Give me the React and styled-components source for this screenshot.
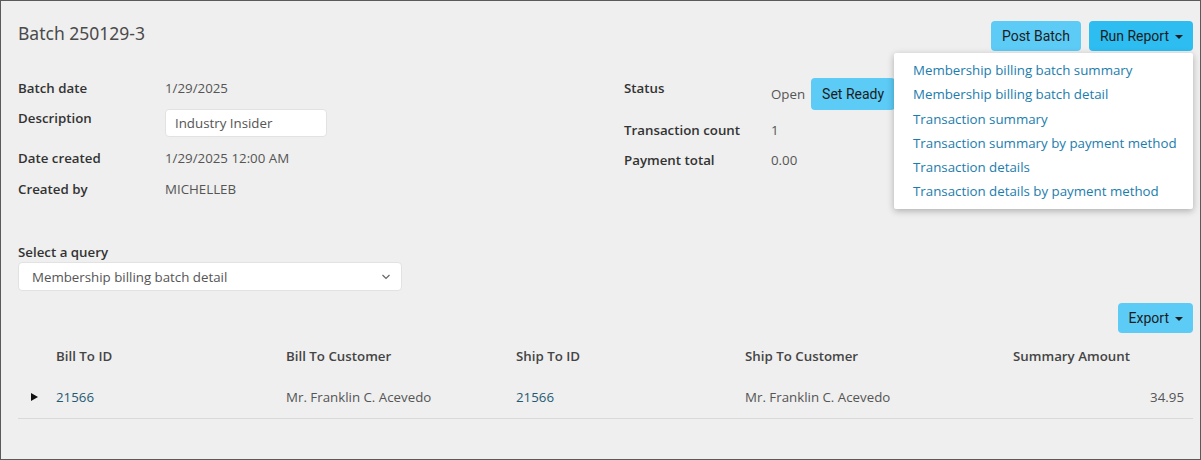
import styled, { createGlobalStyle } from "styled-components";

const GlobalStyle = createGlobalStyle`
    html, body {
        margin: 0;
        padding: 0;
        background: #ffffff;
    }
    * {
        box-sizing: border-box;
    }
`;

const Page = styled.div`
    width: 1201px;
    height: 460px;
    border: 1px solid #5a5a5a;
    background-color: #efefef;
    padding: 19px 7px 0 17px;
    font-family: "Open Sans", "Liberation Sans", sans-serif;
    font-size: 13.3px;
    color: #555;
    overflow: hidden;
`;

const Header = styled.div`
    display: flex;
    justify-content: space-between;
    align-items: flex-start;
    height: 32px;
`;

const Title = styled.h1`
    margin: 1px 0 0;
    font-family: "Noto Sans", "Open Sans", sans-serif;
    font-size: 17.5px;
    font-weight: 400;
    line-height: 24px;
    color: #4a4a4a;
`;

const Actions = styled.div`
    position: relative;
    display: flex;
    gap: 8px;
    margin-top: 1px;
`;

const Button = styled.button`
    display: inline-flex;
    align-items: center;
    gap: 6px;
    height: ${props => props.tall ? "32px" : "30px"};
    padding: 0 ${props => props.caret ? "10px" : "11px"} 0 11px;
    border: none;
    border-radius: 4px;
    background-color: ${props => props.active ? "#2dbdf0" : "#5ccbf6"};
    font-family: Roboto, "Liberation Sans", sans-serif;
    font-size: 14px;
    color: #1c1c1c;
    cursor: pointer;
    white-space: nowrap;
`;

const Caret = styled.span`
    width: 0;
    height: 0;
    border-left: 4px solid transparent;
    border-right: 4px solid transparent;
    border-top: 4px solid #1c1c1c;
    margin-top: 1px;
`;

const Menu = styled.ul`
    position: absolute;
    top: 32px;
    right: 0;
    width: 299px;
    margin: 0;
    padding: 5px 0 5px;
    list-style: none;
    background: #ffffff;
    border-radius: 2px;
    box-shadow: 0 2px 7px rgba(0, 0, 0, 0.28);
    z-index: 5;
`;

const MenuItem = styled.li`
    padding: 0 19px;
    line-height: 24.3px;
    color: #1b7dad;
    white-space: nowrap;
    cursor: pointer;
`;

const Details = styled.div`
    display: flex;
    margin-top: 26px;
`;

const Column = styled.div`
    display: flex;
    flex-direction: column;
    gap: ${props => props.gap}px;
    width: ${props => props.width || "auto"};
`;

const Row = styled.div`
    display: flex;
    align-items: flex-start;
`;

const Label = styled.div`
    width: 147px;
    flex-shrink: 0;
    line-height: 20px;
    font-weight: 600;
    color: #333;
    margin-top: ${props => props.lift ? "-1px" : "0"};
`;

const Value = styled.div`
    display: flex;
    align-items: center;
    gap: 6px;
    line-height: 20px;
    color: #555;
`;

const TextInput = styled.div`
    width: 162px;
    height: 28px;
    padding: 0 9px;
    display: flex;
    align-items: center;
    background: #fff;
    border: 1px solid #e2e2e2;
    border-radius: 4px;
    color: #555;
`;

const QueryBlock = styled.div`
    margin-top: 43px;
    width: 384px;
`;

const QueryLabel = styled.div`
    line-height: 20px;
    font-weight: 600;
    color: #333;
`;

const Select = styled.div`
    height: 29px;
    padding: 0 10px 0 13px;
    display: flex;
    align-items: center;
    justify-content: space-between;
    background: #fff;
    border: 1px solid #e2e2e2;
    border-radius: 4px;
    color: #555;
`;

const ExportBar = styled.div`
    display: flex;
    justify-content: flex-end;
    margin-top: 12px;
`;

const Grid = styled.div`
    display: grid;
    grid-template-columns: 38px 230px 230px 229px 268px 1fr;
    margin-top: 13px;
`;

const HeadCell = styled.div`
    line-height: 20px;
    font-weight: 600;
    color: #444;
    padding-bottom: 21px;
`;

const Cell = styled.div`
    line-height: 20px;
    color: ${props => props.link ? "#1f5a74" : "#555"};
    padding: 0 ${props => props.right ? "9px" : "0"} 11px 0;
    border-bottom: 1px solid #d9d9d9;
    display: flex;
    align-items: center;
    justify-content: ${props => props.right ? "flex-end" : "flex-start"};
`;

const Toggle = styled.span`
    width: 0;
    height: 0;
    margin-left: 13px;
    border-top: 4px solid transparent;
    border-bottom: 4px solid transparent;
    border-left: 7px solid #111;
`;

const reportItems = [
    "Membership billing batch summary",
    "Membership billing batch detail",
    "Transaction summary",
    "Transaction summary by payment method",
    "Transaction details",
    "Transaction details by payment method",
];

const Chevron = () => (
    <svg width="10" height="6" viewBox="0 0 10 6">
        <path d="M1.5 1 L5 4.5 L8.5 1" fill="none" stroke="#666" strokeWidth="1.2" />
    </svg>
);

const App = () => {
    return (
        <>
            <GlobalStyle />
            <Page>
                <Header>
                    <Title>Batch 250129-3</Title>
                    <Actions>
                        <Button>Post Batch</Button>
                        <Button active caret>Run Report <Caret /></Button>
                        <Menu>
                            {reportItems.map(item => (
                                <MenuItem key={item}>{item}</MenuItem>
                            ))}
                        </Menu>
                    </Actions>
                </Header>

                <Details>
                    <Column gap={11} width="606px">
                        <Row>
                            <Label>Batch date</Label>
                            <Value>1/29/2025</Value>
                        </Row>
                        <Row>
                            <Label lift>Description</Label>
                            <TextInput>Industry Insider</TextInput>
                        </Row>
                        <Row>
                            <Label>Date created</Label>
                            <Value>1/29/2025 12:00 AM</Value>
                        </Row>
                        <Row>
                            <Label>Created by</Label>
                            <Value>MICHELLEB</Value>
                        </Row>
                    </Column>
                    <Column gap={10}>
                        <Row>
                            <Label>Status</Label>
                            <Value>
                                Open
                                <Button tall>Set Ready</Button>
                            </Value>
                        </Row>
                        <Row>
                            <Label>Transaction count</Label>
                            <Value>1</Value>
                        </Row>
                        <Row>
                            <Label>Payment total</Label>
                            <Value>0.00</Value>
                        </Row>
                    </Column>
                </Details>

                <QueryBlock>
                    <QueryLabel>Select a query</QueryLabel>
                    <Select>
                        Membership billing batch detail
                        <Chevron />
                    </Select>
                </QueryBlock>

                <ExportBar>
                    <Button caret>Export <Caret /></Button>
                </ExportBar>

                <Grid>
                    <HeadCell />
                    <HeadCell>Bill To ID</HeadCell>
                    <HeadCell>Bill To Customer</HeadCell>
                    <HeadCell>Ship To ID</HeadCell>
                    <HeadCell>Ship To Customer</HeadCell>
                    <HeadCell>Summary Amount</HeadCell>

                    <Cell><Toggle /></Cell>
                    <Cell link>21566</Cell>
                    <Cell>Mr. Franklin C. Acevedo</Cell>
                    <Cell link>21566</Cell>
                    <Cell>Mr. Franklin C. Acevedo</Cell>
                    <Cell right>34.95</Cell>
                </Grid>
            </Page>
        </>
    );
};

export default App;
